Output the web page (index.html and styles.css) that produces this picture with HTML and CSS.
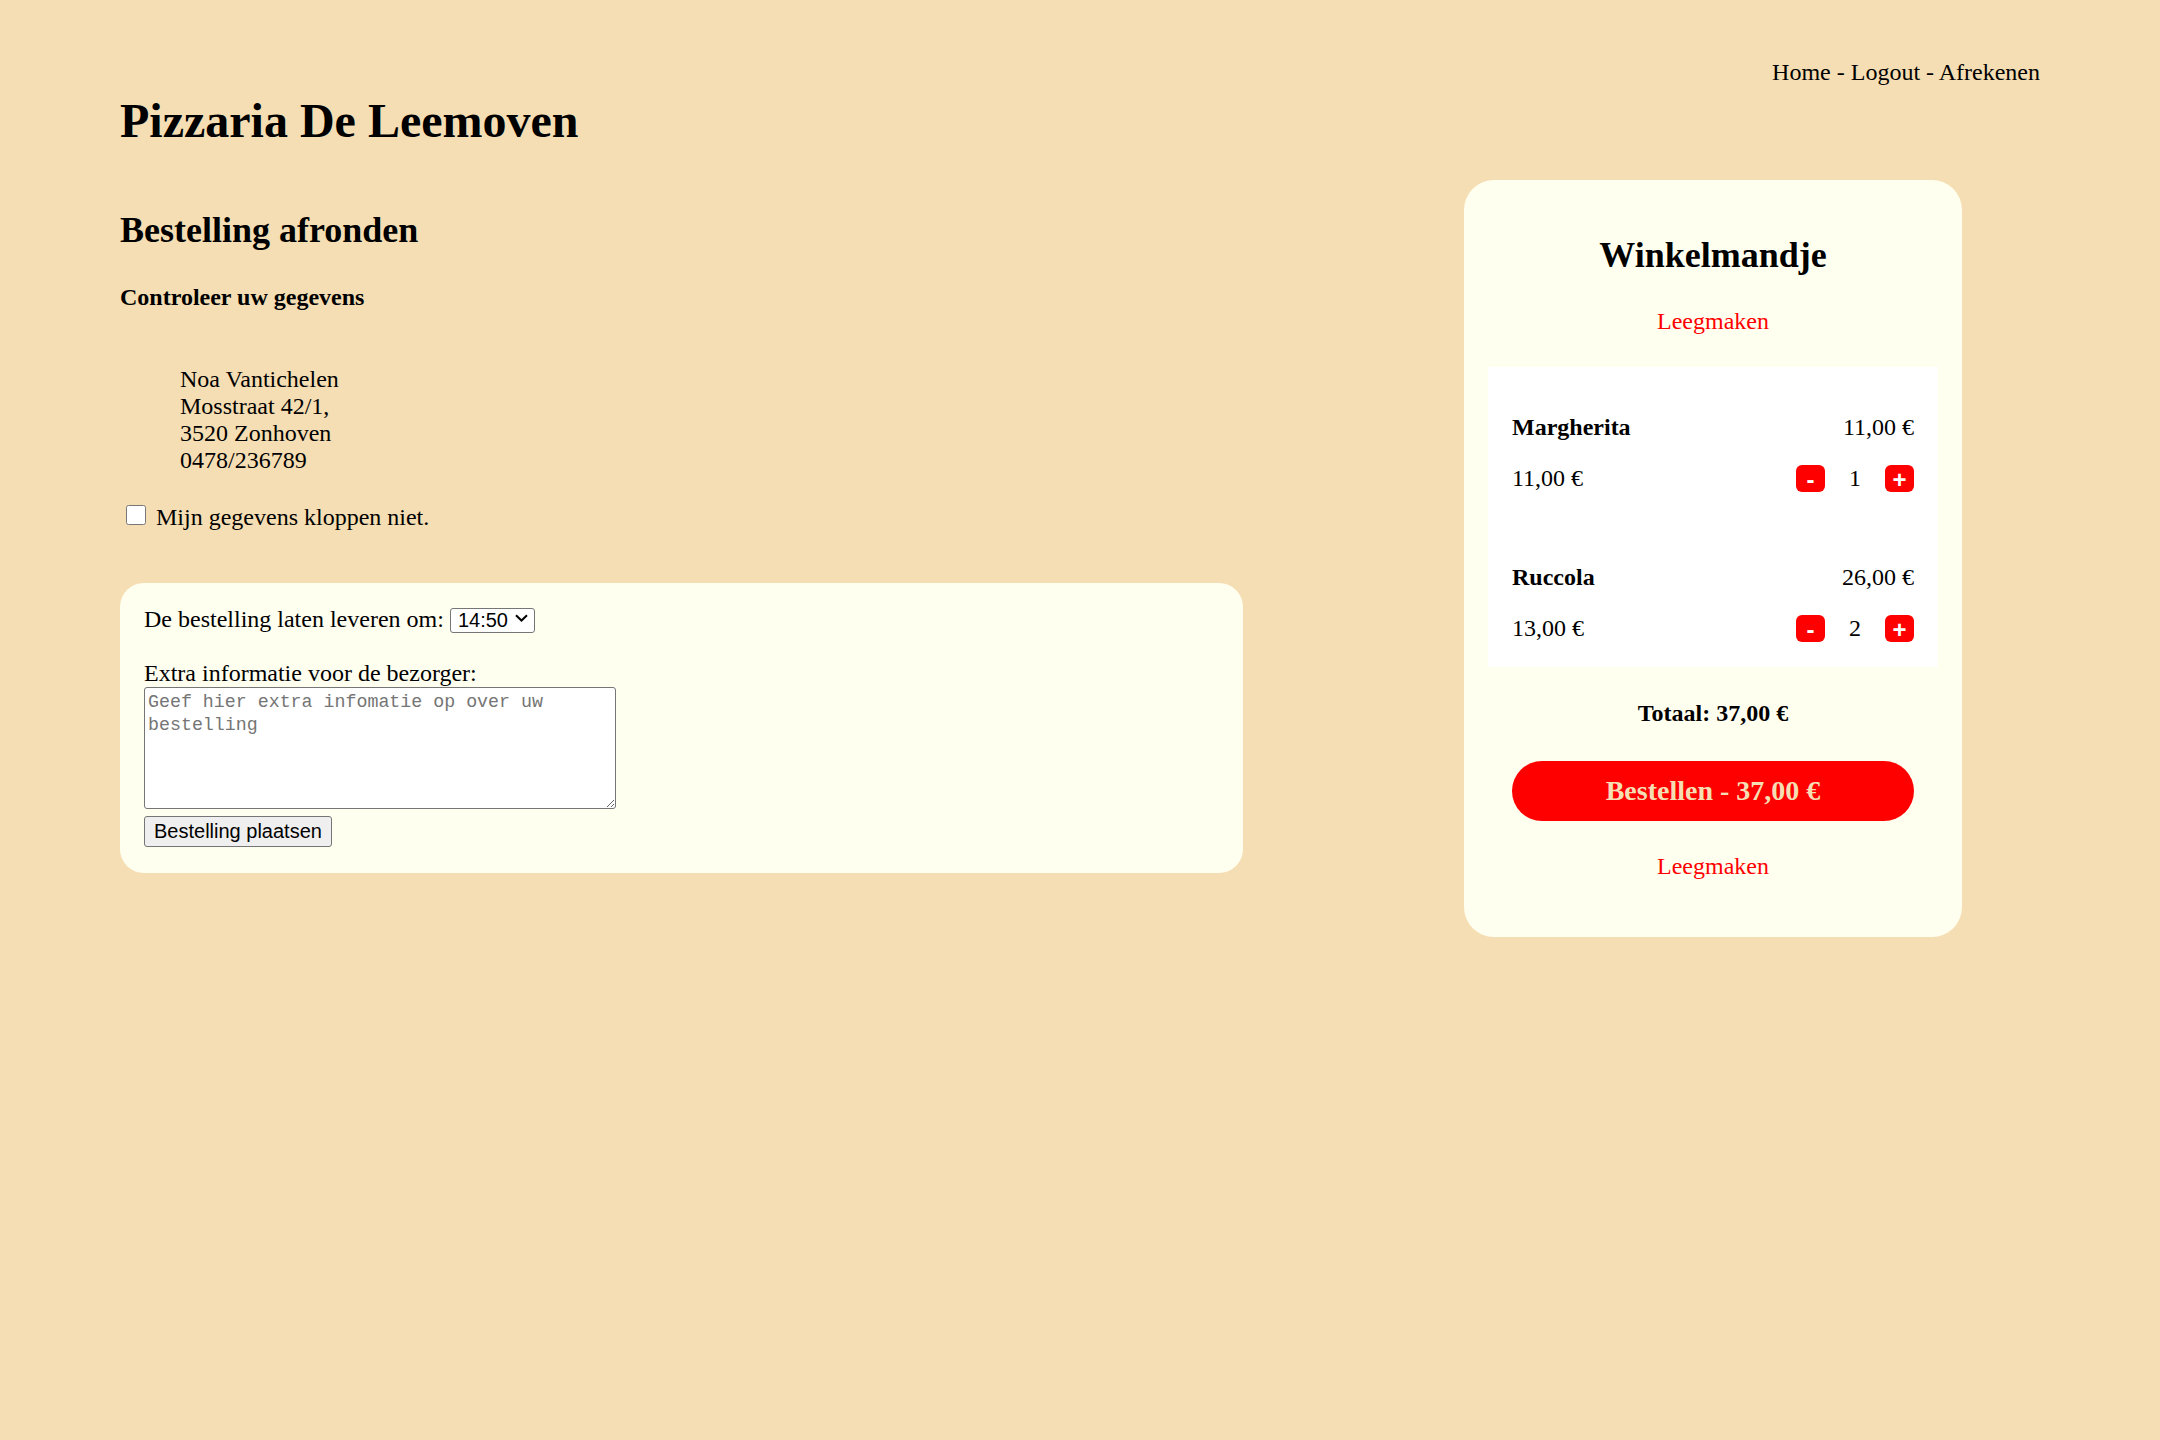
FILE: index.html
```html
<!DOCTYPE html>
<html lang="nl">
<head>
<meta charset="utf-8">
<title>Pizzaria De Leemoven</title>
<link rel="stylesheet" href="styles.css">
</head>
<body>
<div class="page">
  <header class="top">
    <h1 class="brand">Pizzaria De Leemoven</h1>
    <nav class="nav"><a href="#">Home</a> - <a href="#">Logout</a> - <a href="#">Afrekenen</a></nav>
  </header>
  <main class="main">
    <section class="checkout">
      <h2 class="title">Bestelling afronden</h2>
      <h4 class="subtitle">Controleer uw gegevens</h4>
      <blockquote class="address">Noa Vantichelen<br>Mosstraat 42/1,<br>3520 Zonhoven<br>0478/236789</blockquote>
      <label class="check"><input type="checkbox" class="check-box"> Mijn gegevens kloppen niet.</label>
      <form class="order-card">
        <div class="time-row">De bestelling laten leveren om: <span class="select-wrap"><select class="time-select"><option>14:50</option></select><svg class="chevron" width="13" height="8" viewBox="0 0 13 8"><path d="M1 1.2 L6.5 6.5 L12 1.2" fill="none" stroke="#000" stroke-width="2"/></svg></span></div>
        <label class="extra-label">Extra informatie voor de bezorger:</label>
        <textarea class="extra-text" placeholder="Geef hier extra infomatie op over uw bestelling"></textarea>
        <button type="button" class="place-btn">Bestelling plaatsen</button>
      </form>
    </section>
    <aside class="cart">
      <h2 class="cart-title">Winkelmandje</h2>
      <p class="clear"><a href="#" class="clear-link">Leegmaken</a></p>
      <div class="items">
        <div class="item">
          <div class="item-head"><strong>Margherita</strong><span>11,00 €</span></div>
          <div class="item-body">
            <span>11,00 €</span>
            <div class="qty">
              <span class="qbtn">-</span>
              <span class="qnum">1</span>
              <span class="qbtn">+</span>
            </div>
          </div>
        </div>
        <div class="item">
          <div class="item-head"><strong>Ruccola</strong><span>26,00 €</span></div>
          <div class="item-body">
            <span>13,00 €</span>
            <div class="qty">
              <span class="qbtn">-</span>
              <span class="qnum">2</span>
              <span class="qbtn">+</span>
            </div>
          </div>
        </div>
      </div>
      <p class="total">Totaal: 37,00 €</p>
      <a href="#" class="order-btn">Bestellen - 37,00 €</a>
      <p class="clear clear-bottom"><a href="#" class="clear-link">Leegmaken</a></p>
    </aside>
  </main>
</div>
</body>
</html>
```
FILE: styles.css
```css
html, body {
  margin: 0;
  padding: 0;
}
body {
  background: #f5deb3;
  font-family: "Liberation Serif", "Times New Roman", serif;
  font-size: 24px;
  color: #000;
}
.page {
  padding: 0 120px;
}
.top {
  display: flex;
  justify-content: space-between;
  align-items: flex-start;
}
.brand {
  font-size: 48px;
  font-weight: bold;
  margin: 93px 0 32px;
  line-height: normal;
}
.nav {
  margin-top: 59px;
}
.nav a {
  color: #000;
  text-decoration: none;
}
.main {
  display: flex;
  align-items: flex-start;
}
.checkout {
  width: 1123px;
  flex: none;
}
.title {
  font-size: 36px;
  margin: 29px 0 0;
  line-height: normal;
}
.subtitle {
  font-size: 24px;
  margin: 33px 0 0;
  line-height: normal;
}
.address {
  margin: 55px 0 0 60px;
}
.check {
  display: block;
  margin-top: 26.5px;
}
.check-box {
  width: 19.5px;
  height: 19.5px;
  margin: 4.5px 4.5px 4.5px 6px;
  vertical-align: baseline;
}
.order-card {
  margin-top: 52.5px;
  background: #fffff0;
  border-radius: 24px;
  padding: 22px 24px 25.5px;
}
.time-row {
  line-height: 28px;
}
.select-wrap {
  position: relative;
  display: inline-block;
}
.time-select {
  -webkit-appearance: none;
  appearance: none;
  box-sizing: border-box;
  font-family: "Liberation Sans", Arial, sans-serif;
  font-size: 20px;
  width: 85px;
  height: 25px;
  padding: 0 0 0 7px;
  border: 1px solid #767676;
  border-radius: 3px;
  background: #fff;
  color: #000;
}
.chevron {
  position: absolute;
  right: 7px;
  top: 8.5px;
  pointer-events: none;
}
.extra-label {
  display: block;
  margin-top: 27.4px;
}
.extra-text {
  display: block;
  box-sizing: border-box;
  width: 472px;
  height: 122px;
  padding: 3px;
  border: 1px solid #767676;
  border-radius: 3px;
  font-family: "Liberation Mono", "Courier New", monospace;
  font-size: 18.3px;
  line-height: 22.7px;
  background: #fff;
}
.extra-text::placeholder {
  color: #757575;
}
.place-btn {
  display: block;
  margin-top: 7px;
  box-sizing: border-box;
  height: 31px;
  padding: 0 9px;
  font-family: "Liberation Sans", Arial, sans-serif;
  font-size: 20px;
  background: #efefef;
  border: 1px solid #767676;
  border-radius: 3px;
  color: #000;
}
.cart {
  flex: none;
  width: 498px;
  box-sizing: border-box;
  margin-left: 221px;
  background: #fffff0;
  border-radius: 30px;
  padding: 24px;
  text-align: center;
}
.cart-title {
  font-size: 36px;
  margin: 30px 0 0;
  line-height: normal;
}
.clear {
  margin: 32px 0 0;
}
.clear-link {
  color: #ff0000;
  text-decoration: none;
}
.items {
  margin-top: 32px;
  background: #fff;
  padding: 0 24px;
  text-align: left;
}
.item {
  padding: 47px 0 25px;
}
.item-head {
  display: flex;
  justify-content: space-between;
}
.item-body {
  display: flex;
  justify-content: space-between;
  align-items: center;
  margin-top: 24px;
}
.qty {
  display: flex;
  align-items: center;
  gap: 24px;
}
.qbtn {
  display: block;
  box-sizing: border-box;
  width: 29px;
  height: 27px;
  padding-top: 3px;
  border-radius: 6px;
  background: #ff0000;
  color: #fff;
  font-family: "Liberation Sans", Arial, sans-serif;
  font-weight: bold;
  font-size: 24px;
  line-height: 24px;
  text-align: center;
}
.qnum {
  display: block;
  width: 12px;
  text-align: center;
}
.total {
  font-weight: bold;
  margin: 33px 0 0;
}
.order-btn {
  display: block;
  margin: 34px 24px 0;
  height: 60px;
  line-height: 60px;
  border-radius: 30px;
  background: #ff0000;
  color: #f5deb3;
  font-weight: bold;
  font-size: 28px;
  text-decoration: none;
}
.clear-bottom {
  margin: 32px 0 33px;
}
```
